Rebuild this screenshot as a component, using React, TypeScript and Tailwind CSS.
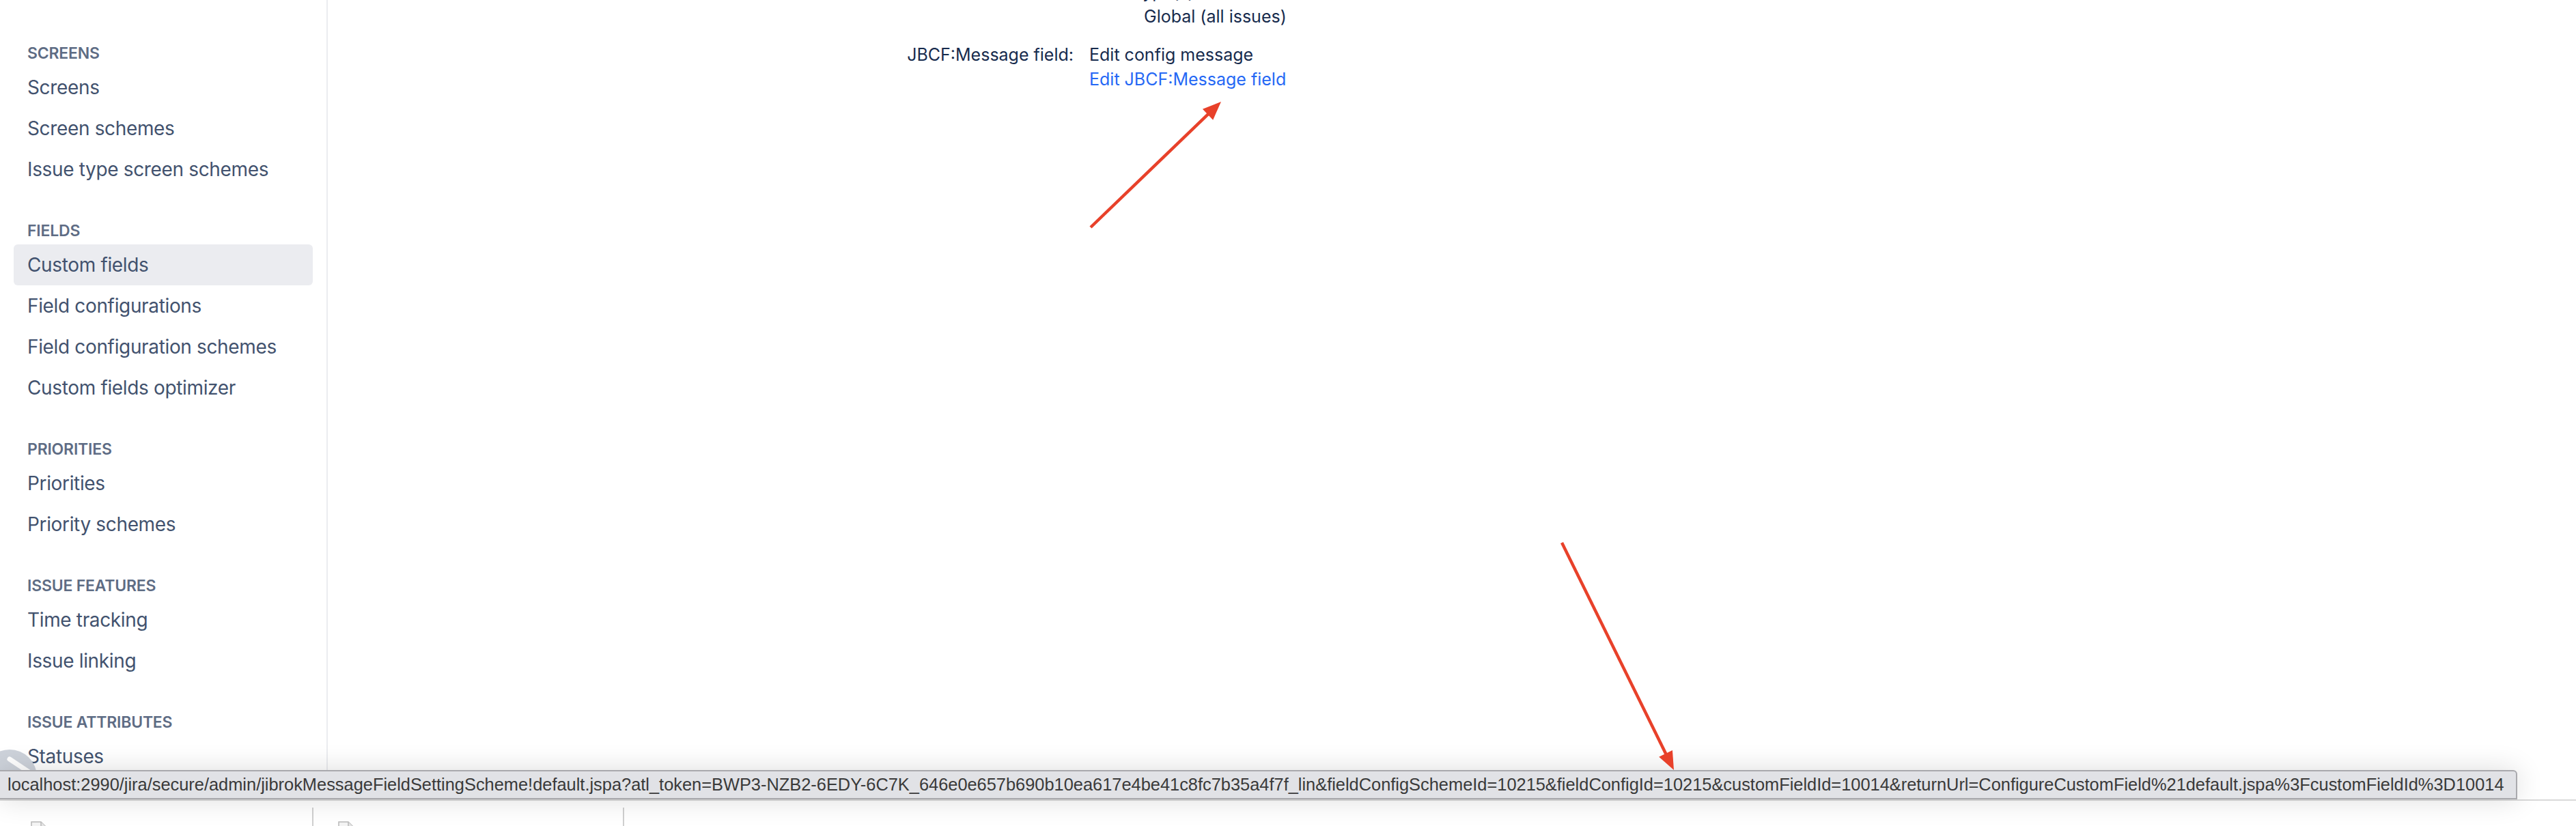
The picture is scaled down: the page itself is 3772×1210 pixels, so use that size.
import React from "react";

const groups: { title: string; items: string[] }[] = [
  { title: "SCREENS", items: ["Screens", "Screen schemes", "Issue type screen schemes"] },
  {
    title: "FIELDS",
    items: ["Custom fields", "Field configurations", "Field configuration schemes", "Custom fields optimizer"],
  },
  { title: "PRIORITIES", items: ["Priorities", "Priority schemes"] },
  { title: "ISSUE FEATURES", items: ["Time tracking", "Issue linking"] },
  { title: "ISSUE ATTRIBUTES", items: ["Statuses"] },
];

const URL_TEXT =
  "localhost:2990/jira/secure/admin/jibrokMessageFieldSettingScheme!default.jspa?atl_token=BWP3-NZB2-6EDY-6C7K_646e0e657b690b10ea617e4be41c8fc7b35a4f7f_lin&fieldConfigSchemeId=10215&fieldConfigId=10215&customFieldId=10014&returnUrl=ConfigureCustomField%21default.jspa%3FcustomFieldId%3D10014";

function Arrow({ x1, y1, x2, y2 }: { x1: number; y1: number; x2: number; y2: number }) {
  const dx = x2 - x1;
  const dy = y2 - y1;
  const len = Math.hypot(dx, dy);
  const ux = dx / len;
  const uy = dy / len;
  const hl = 27;
  const hw = 11;
  const bx = x2 - ux * hl;
  const by = y2 - uy * hl;
  const px = -uy;
  const py = ux;
  return (
    <g>
      <line x1={x1} y1={y1} x2={bx + ux * 3} y2={by + uy * 3} stroke="#e8412a" strokeWidth={4.5} />
      <polygon
        points={`${x2},${y2} ${bx + px * hw},${by + py * hw} ${bx - px * hw},${by - py * hw}`}
        fill="#e8412a"
      />
    </g>
  );
}

function FileIcon() {
  return (
    <svg width="24" height="30" viewBox="0 0 24 30">
      <path d="M1 1 H15 L23 9 V29 H1 Z" fill="#f4f4f4" stroke="#b9b9b9" strokeWidth="1.5" />
      <path d="M15 1 V9 H23" fill="#e4e4e4" stroke="#b9b9b9" strokeWidth="1.5" />
    </svg>
  );
}

export default function App() {
  return (
    <div className="relative w-[3772px] h-[1210px] overflow-hidden bg-white font-['Inter',sans-serif]">
      <div className="flex flex-col h-full">
        <div className="flex h-[1171px] overflow-hidden">
          {/* Sidebar */}
          <aside className="w-[480px] shrink-0 border-r-2 border-[#ebecf0] px-[20px] pt-[62px] flex flex-col gap-[44px]">
            {groups.map((g) => (
              <div key={g.title} className="flex flex-col">
                <div className="px-[20px] h-[32px] leading-[32px] text-[23px] tracking-[-0.2px] font-semibold text-[#5e6c84] mb-[4px]">
                  {g.title}
                </div>
                {g.items.map((it) => (
                  <div
                    key={it}
                    className={
                      "px-[20px] h-[60px] leading-[60px] text-[28px] tracking-[-0.35px] text-[#42526e] rounded-[6px] whitespace-nowrap " +
                      (it === "Custom fields" ? "bg-[#ebecf0]" : "")
                    }
                  >
                    {it}
                  </div>
                ))}
              </div>
            ))}
          </aside>

          {/* Main content */}
          <main className="flex-1 overflow-hidden">
            <div className="pl-[592px] -mt-[30px] text-[25px] leading-[36px] text-[#172b4d]">
              <div className="flex">
                <div className="w-[500px] shrink-0 text-right"></div>
                <div className="pl-[23px]">
                  <div>Issue type(s):</div>
                  <div className="pl-[80px]">Global (all issues)</div>
                </div>
              </div>
              <div className="flex mt-[20px]">
                <div className="w-[500px] shrink-0 text-right">JBCF:Message field:</div>
                <div className="pl-[23px]">
                  <div>Edit config message</div>
                  <a className="block text-[#2568f5]">Edit JBCF:Message field</a>
                </div>
              </div>
            </div>
          </main>
        </div>

        {/* Downloads shelf */}
        <div className="relative h-[39px] border-t-2 border-[#d9d9d9] bg-white flex">
          <div className="w-[459px] h-full relative overflow-hidden border-r-2 border-[#d0d0d0] mt-[10px]">
            <div className="absolute left-[45px] top-[20px]">
              <FileIcon />
            </div>
          </div>
          <div className="w-[455px] h-full relative overflow-hidden border-r-2 border-[#d0d0d0] mt-[10px]">
            <div className="absolute left-[36px] top-[20px]">
              <FileIcon />
            </div>
          </div>
        </div>
      </div>

      {/* Partially hidden round button */}
      <svg className="absolute left-0 top-[1090px]" width="60" height="40" viewBox="0 0 60 40">
        <circle cx="14" cy="48" r="40" fill="#cdd2da" />
        <line x1="14" y1="22" x2="44" y2="42" stroke="#ffffff" strokeWidth="7" strokeLinecap="round" />
      </svg>

      {/* Status bar */}
      <div className="absolute left-0 top-[1128px] w-[3686px] h-[43px] bg-[#e1e2e6] border-t-2 border-b-2 border-r-2 border-[#a9a9ad] rounded-tr-[6px] shadow-[0_0_40px_rgba(0,0,0,0.14)] overflow-hidden">
        <div className="pl-[11px] text-[25.4px] leading-[39px] text-[#3a3a3a] whitespace-nowrap font-['Liberation_Sans',sans-serif]">
          {URL_TEXT}
        </div>
      </div>

      {/* Annotation arrows */}
      <svg className="absolute inset-0 pointer-events-none" width="3772" height="1210">
        <Arrow x1={1597} y1={333} x2={1788} y2={149} />
        <Arrow x1={2287} y1={795} x2={2451} y2={1128} />
      </svg>
    </div>
  );
}
